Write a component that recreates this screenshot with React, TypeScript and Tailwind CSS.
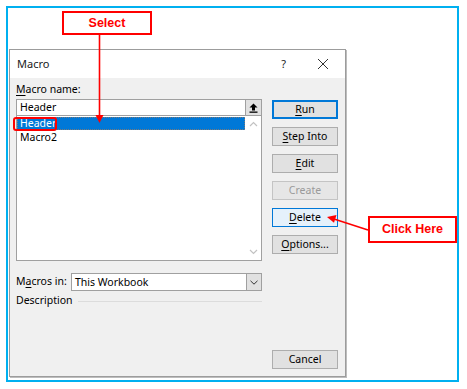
import React from "react";

const ui = { fontFamily: '"Noto Sans", "Open Sans", sans-serif' } as const;

function Btn({
  children,
  variant = "normal",
}: {
  children: React.ReactNode;
  variant?: "normal" | "default" | "hover" | "disabled";
}) {
  const cls =
    variant === "default"
      ? "bg-[#e1e1e1] border-[#0078d7] shadow-[inset_0_0_0_1px_#0078d7] text-black"
      : variant === "hover"
      ? "bg-[#e5f1fb] border-[#0078d7] text-black"
      : variant === "disabled"
      ? "bg-[#e6e6e6] border-[#c4c4c4] text-[#9a9a9a]"
      : "bg-[#e1e1e1] border-[#adadad] text-black";
  return (
    <div
      className={`h-[19px] w-[66px] border flex items-center justify-center text-[10.5px] leading-none ${cls}`}
    >
      {children}
    </div>
  );
}

function U({ children }: { children: React.ReactNode }) {
  return <span className="underline underline-offset-[2px]">{children}</span>;
}

export default function App() {
  return (
    <div className="relative w-[467px] h-[389px] bg-white overflow-hidden" style={ui}>
      <div className="ml-[6px] mt-[6px] w-[453px] h-[376px] border-2 border-[#00b0f0] pt-[41px] pl-[1px]">
        {/* Dialog */}
        <div className="w-[337px] h-[328px] border border-[#9c9c9c] shadow-[1px_1px_0_#bdbdbd] flex flex-col bg-[#f0f0f0]">
          {/* title bar */}
          <div className="h-[28px] bg-white flex items-center pl-[7px] pr-[16px] text-[11px] text-[#1a1a1a]">
            <span>Macro</span>
            <span className="ml-auto mr-[31px] text-[11px]">?</span>
            <svg width="12" height="12" viewBox="0 0 12 12">
              <path d="M1 1 L11 11 M11 1 L1 11" stroke="#333" strokeWidth="1" fill="none" />
            </svg>
          </div>
          {/* body */}
          <div className="flex-1 flex pl-[6px] text-[10.5px] text-black">
            {/* left column */}
            <div className="w-[246px] flex flex-col">
              <div className="h-[21px] pt-[3px] leading-[16px]">
                <U>M</U>acro name:
              </div>
              <div className="h-[17px] bg-white border border-[#a0a0a0] flex items-center">
                <span className="pl-[3px] leading-none">Header</span>
                <div className="ml-auto h-[15px] w-[16px] bg-[#e1e1e1] border-l border-[#a0a0a0] flex items-center justify-center">
                  <svg width="9" height="10" viewBox="0 0 9 10">
                    <path d="M4.5 0.5 L8.5 4.5 L6 4.5 L6 7.5 L3 7.5 L3 4.5 L0.5 4.5 Z" fill="#000" />
                    <rect x="0.5" y="8.5" width="8" height="1.3" fill="#000" />
                  </svg>
                </div>
              </div>
              <div className="h-[145px] bg-white border border-t-0 border-[#a0a0a0] flex">
                <div className="flex-1 pt-[1px]">
                  <div className="h-[13px] bg-[#0078d7] text-white leading-[13px] pl-[3px] outline-1 outline-dotted outline-[#7a7a7a] -outline-offset-1">
                    Header
                  </div>
                  <div className="h-[14px] leading-[14px] pl-[3px]">Macro2</div>
                </div>
                <div className="w-[16px] flex flex-col items-center justify-between py-[5px]">
                  <svg width="9" height="6" viewBox="0 0 9 6">
                    <path d="M1 5 L4.5 1.5 L8 5" stroke="#c2c2c2" strokeWidth="1.2" fill="none" />
                  </svg>
                  <svg width="9" height="6" viewBox="0 0 9 6">
                    <path d="M1 1 L4.5 4.5 L8 1" stroke="#c2c2c2" strokeWidth="1.2" fill="none" />
                  </svg>
                </div>
              </div>
              <div className="mt-[12px] h-[18px] flex items-center">
                <span className="w-[55px]">
                  M<U>a</U>cros in:
                </span>
                <div className="flex-1 h-[18px] bg-white border border-[#a0a0a0] flex items-center">
                  <span className="pl-[3px] leading-none">This Workbook</span>
                  <div className="ml-auto h-[16px] w-[15px] bg-[#e1e1e1] border-l border-[#a0a0a0] flex items-center justify-center">
                    <svg width="8" height="5" viewBox="0 0 8 5">
                      <path d="M0.5 0.8 L4 4.2 L7.5 0.8" stroke="#333" strokeWidth="1" fill="none" />
                    </svg>
                  </div>
                </div>
              </div>
              <div className="mt-[2px] h-[16px] flex items-center">
                <span>Description</span>
                <div className="flex-1 ml-[5px] h-px bg-[#dcdcdc]" />
              </div>
            </div>
            {/* right column */}
            <div className="ml-[10px] w-[66px] flex flex-col pb-[7px]">
              <div className="mt-[22px] flex flex-col gap-[8px]">
                <Btn variant="default">
                  <U>R</U>un
                </Btn>
                <Btn>
                  <U>S</U>tep Into
                </Btn>
                <Btn>
                  <U>E</U>dit
                </Btn>
                <Btn variant="disabled">Create</Btn>
                <Btn variant="hover">
                  <U>D</U>elete
                </Btn>
                <Btn>
                  <U>O</U>ptions...
                </Btn>
              </div>
              <div className="mt-auto">
                <Btn>Cancel</Btn>
              </div>
            </div>
          </div>
        </div>
      </div>

      {/* annotations */}
      <div className="absolute left-[13px] top-[117px] w-[44px] h-[14px] border-2 border-[#ff0000] rounded-[3px]" />
      <svg className="absolute left-0 top-0 pointer-events-none" width="467" height="389" viewBox="0 0 467 389">
        <line x1="99.5" y1="35" x2="99.5" y2="116" stroke="#ff0000" strokeWidth="1.6" />
        <path d="M95.5 115 L103.5 115 L99.5 123 Z" fill="#ff0000" />
        <line x1="368" y1="230" x2="334" y2="219" stroke="#ff0000" strokeWidth="1.6" />
        <path d="M327 217 L336.5 215 L334 222.8 Z" fill="#ff0000" />
      </svg>
      <div
        className="absolute left-[62px] top-[11px] w-[90px] h-[24px] border-2 border-[#ff0000] bg-white flex items-center justify-center text-[#ff0000] font-bold text-[12.5px]"
        style={{ fontFamily: '"Liberation Sans", Arial, sans-serif' }}
      >
        Select
      </div>
      <div
        className="absolute left-[368px] top-[216px] w-[89px] h-[27px] border-2 border-[#ff0000] bg-white flex items-center justify-center text-[#ff0000] font-bold text-[12.5px]"
        style={{ fontFamily: '"Liberation Sans", Arial, sans-serif' }}
      >
        Click Here
      </div>
    </div>
  );
}
